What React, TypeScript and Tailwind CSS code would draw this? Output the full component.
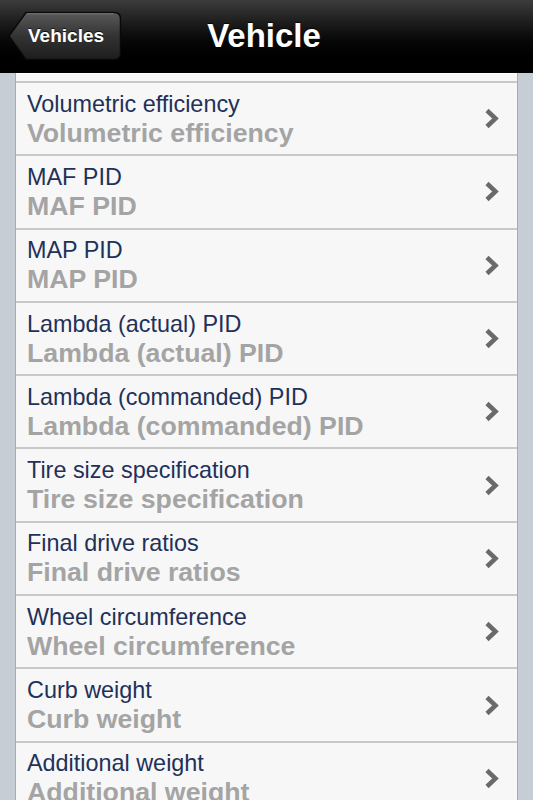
const rows = [
  "Volumetric efficiency",
  "MAF PID",
  "MAP PID",
  "Lambda (actual) PID",
  "Lambda (commanded) PID",
  "Tire size specification",
  "Final drive ratios",
  "Wheel circumference",
  "Curb weight",
  "Additional weight",
];

function Chevron() {
  return (
    <svg width="15" height="21" viewBox="0 0 15 21" className="shrink-0">
      <path d="M3 2.5 L11.5 10.5 L3 18.5" fill="none" stroke="#6a6a6a" strokeWidth="4.5" strokeLinejoin="miter" />
    </svg>
  );
}

function BackButton() {
  return (
    <div className="relative h-[50px] w-[114px]">
      <svg className="absolute inset-0" width="114" height="50" viewBox="0 0 114 50">
        <defs>
          <linearGradient id="bb" x1="0" y1="0" x2="0" y2="1">
            <stop offset="0" stopColor="#5a5a5a" />
            <stop offset="0.5" stopColor="#333" />
            <stop offset="1" stopColor="#1d1d1d" />
          </linearGradient>
        </defs>
        <path
          d="M1 25 L18 1.5 H106 Q112.5 1.5 112.5 8 V42 Q112.5 48.5 106 48.5 H18 Z"
          fill="url(#bb)"
          stroke="#0a0a0a"
          strokeWidth="1.5"
        />
        <path d="M19 2.8 H105.5" stroke="#7a7a7a" strokeWidth="1" />
      </svg>
      <span className="absolute left-[20px] top-0 flex h-full items-center text-[19px] font-bold text-white [text-shadow:0_-1px_0_rgba(0,0,0,0.7)]">
        Vehicles
      </span>
    </div>
  );
}

export default function App() {
  return (
    <div
      className="h-[800px] w-[533px] overflow-hidden bg-[#c6cdd5]"
      style={{ fontFamily: '"Liberation Sans", Arial, sans-serif' }}
    >
      {/* nav bar */}
      <div className="relative flex h-[73px] items-center bg-gradient-to-b from-[#3c3c3c] via-[#0c0c0c] to-black px-[8px] border-b border-black">
        <BackButton />
        <div className="absolute left-0 right-0 top-0 flex h-full items-center justify-center pointer-events-none">
          <span className="ml-[-5px] text-[33px] font-bold text-white [text-shadow:0_-1px_0_rgba(0,0,0,0.8)]">
            Vehicle
          </span>
        </div>
      </div>

      {/* grouped list */}
      <div className="mx-[15px] border-x border-[#a8acb0] bg-[#f7f7f7]">
        <div className="h-[8px] border-t border-white" />
        {rows.map((r) => (
          <div
            key={r}
            className="flex h-[73.3px] items-center border-t-2 border-[#c9c9c9] pl-[11px] pr-[18px]"
          >
            <div className="flex-1 min-w-0">
              <div className="text-[23.4px] leading-[29px] text-[#1f3158] whitespace-nowrap">{r}</div>
              <div className="text-[26.7px] leading-[29px] font-bold text-[#a4a4a4] whitespace-nowrap">{r}</div>
            </div>
            <Chevron />
          </div>
        ))}
      </div>
    </div>
  );
}
